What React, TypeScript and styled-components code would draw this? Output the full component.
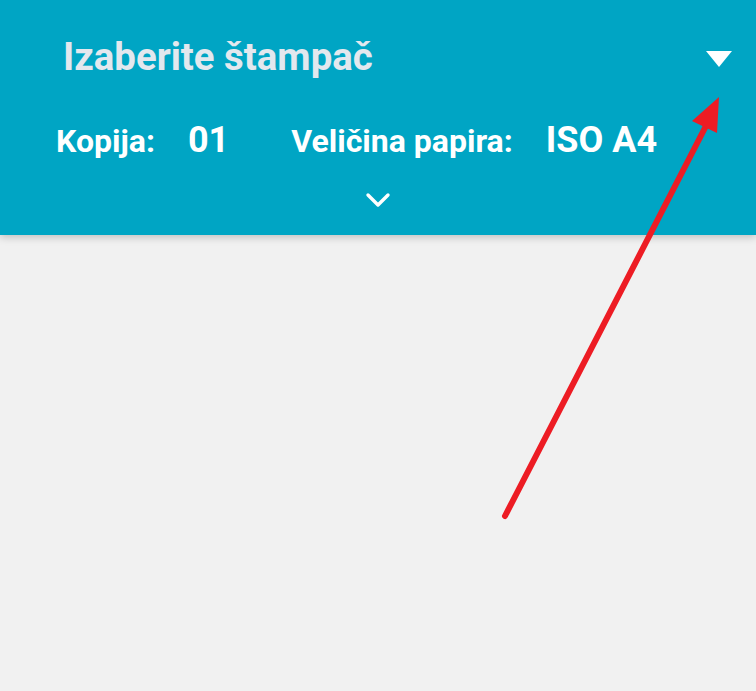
import React from "react";
import styled, { createGlobalStyle } from "styled-components";

const GlobalStyle = createGlobalStyle`
  html, body {
    margin: 0;
    padding: 0;
    background: #f1f1f1;
    font-family: Roboto, "Noto Sans", sans-serif;
  }
`;

const Screen = styled.div`
  position: relative;
  width: 756px;
  height: 691px;
  overflow: hidden;
  background: #f1f1f1;
`;

const Header = styled.header`
  position: relative;
  z-index: 1;
  height: 235px;
  box-sizing: border-box;
  background: #00a5c4;
  box-shadow: 0 2px 8px rgba(0, 0, 0, 0.22);
  display: flex;
  flex-direction: column;
  padding: 34px 24px 0 56px;
`;

const TitleRow = styled.div`
  display: flex;
  align-items: center;
  justify-content: space-between;
  padding-left: 7px;
`;

const Title = styled.h1`
  margin: 0;
  font-size: 38.4px;
  font-weight: 700;
  color: #e3e8ee;
`;

const Dropdown = styled.button`
  border: none;
  background: transparent;
  padding: 0;
  width: 26px;
  height: 16px;
  display: flex;
  margin-top: 4px;
`;

const SettingsRow = styled.div`
  display: flex;
  align-items: baseline;
  margin-top: 40px;
`;

const Label = styled.span<{ gap: number }>`
  font-size: 32px;
  font-weight: 700;
  color: #ffffff;
  margin-right: ${(p) => p.gap}px;
`;

const Value = styled.span<{ gap?: number }>`
  font-size: 36px;
  font-weight: 700;
  color: #ffffff;
  margin-right: ${(p) => p.gap ?? 0}px;
`;

const Expand = styled.div`
  display: flex;
  justify-content: center;
  margin: 31px -24px 0 -56px;
`;

const Pointer = styled.svg`
  position: absolute;
  inset: 0;
  z-index: 2;
  pointer-events: none;
`;

export default function App() {
  return (
    <Screen>
      <GlobalStyle />
      <Header>
        <TitleRow>
          <Title>Izaberite štampač</Title>
          <Dropdown aria-label="Izaberi">
            <svg width="26" height="16" viewBox="0 0 26 16">
              <path d="M0 0 L26 0 L13 16 Z" fill="#ffffff" />
            </svg>
          </Dropdown>
        </TitleRow>
        <SettingsRow>
          <Label gap={33}>Kopija:</Label>
          <Value gap={62}>01</Value>
          <Label gap={33}>Veličina papira:</Label>
          <Value>ISO A4</Value>
        </SettingsRow>
        <Expand>
          <svg width="26" height="16" viewBox="0 0 26 16">
            <path
              d="M3 3 L13 13 L23 3"
              fill="none"
              stroke="#ffffff"
              strokeWidth="3.4"
              strokeLinecap="round"
              strokeLinejoin="round"
            />
          </svg>
        </Expand>
      </Header>
      <Pointer width="756" height="691" viewBox="0 0 756 691">
        <line
          x1="505"
          y1="516"
          x2="708"
          y2="122"
          stroke="#ed1c24"
          strokeWidth="6"
          strokeLinecap="round"
        />
        <path d="M719 97 L717 133 L692 121 Z" fill="#ed1c24" />
      </Pointer>
    </Screen>
  );
}
